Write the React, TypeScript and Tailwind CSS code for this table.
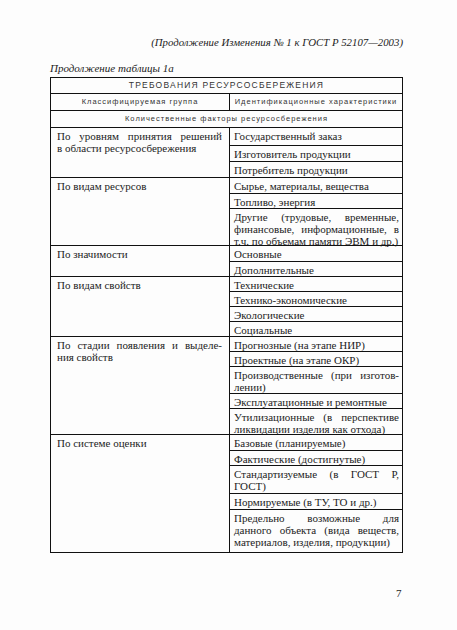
type Item = { lines: string[]; h: number };
type Group = { label: string[]; items: Item[] };

// heights include the row's own top border; the group border adds 1px on top of the first item
const GROUPS: Group[] = [
  {
    label: ["По уровням принятия решений", "в области ресурсосбережения"],
    items: [
      { lines: ["Государственный заказ"], h: 17 },
      { lines: ["Изготовитель продукции"], h: 16 },
      { lines: ["Потребитель продукции"], h: 16 },
    ],
  },
  {
    label: ["По видам ресурсов"],
    items: [
      { lines: ["Сырье, материалы, вещества"], h: 15 },
      { lines: ["Топливо, энергия"], h: 15 },
      {
        lines: [
          "Другие (трудовые, временные,",
          "финансовые, информационные, в",
          "т.ч. по объемам памяти ЭВМ и др.)",
        ],
        h: 37,
      },
    ],
  },
  {
    label: ["По значимости"],
    items: [
      { lines: ["Основные"], h: 15 },
      { lines: ["Дополнительные"], h: 15 },
    ],
  },
  {
    label: ["По видам свойств"],
    items: [
      { lines: ["Технические"], h: 14 },
      { lines: ["Технико-экономические"], h: 15 },
      { lines: ["Экологические"], h: 15 },
      { lines: ["Социальные"], h: 15 },
    ],
  },
  {
    label: ["По стадии появления и выделе-", "ния свойств"],
    items: [
      { lines: ["Прогнозные (на этапе НИР)"], h: 14 },
      { lines: ["Проектные (на этапе ОКР)"], h: 15 },
      { lines: ["Производственные (при изготов-", "лении)"], h: 27 },
      { lines: ["Эксплуатационные и ремонтные"], h: 15 },
      { lines: ["Утилизационные (в перспективе", "ликвидации изделия как отхода)"], h: 26 },
    ],
  },
  {
    label: ["По системе оценки"],
    items: [
      { lines: ["Базовые (планируемые)"], h: 15 },
      { lines: ["Фактические (достигнутые)"], h: 15 },
      { lines: ["Стандартизуемые (в ГОСТ Р,", "ГОСТ)"], h: 28 },
      { lines: ["Нормируемые (в ТУ, ТО и др.)"], h: 16 },
      {
        lines: [
          "Предельно возможные для",
          "данного объекта (вида веществ,",
          "материалов, изделия, продукции)",
        ],
        h: 43,
      },
    ],
  },
];

function Lines({ lines }: { lines: string[] }) {
  return (
    <>
      {lines.map((l, i) => (
        <div
          key={i}
          className={
            i < lines.length - 1
              ? "whitespace-nowrap text-justify [text-align-last:justify]"
              : "whitespace-nowrap"
          }
        >
          {l}
        </div>
      ))}
    </>
  );
}

export default function App() {
  return (
    <div className="w-[457px] h-[630px] bg-[#fdfdfd] text-[#1c1c1c] font-['Liberation_Serif',serif] relative">
      <div className="pt-[34px] pr-[54px] text-right italic text-[10.8px] leading-[16px]">
        (Продолжение Изменения № 1 к ГОСТ Р 52107—2003)
      </div>

      <div className="pl-[50px] pt-[10px] italic text-[11px] leading-[16px]">
        Продолжение таблицы 1а
      </div>

      <div className="ml-[50px] mt-[1px] w-[353px] border border-[#111]">
        <div className="h-[15px] flex items-center justify-center font-['Liberation_Sans',sans-serif] text-[8.5px] tracking-[1.2px] text-[#333]">
          ТРЕБОВАНИЯ РЕСУРСОСБЕРЕЖЕНИЯ
        </div>
        <div className="flex h-[17px] border-t border-[#111] font-['Liberation_Sans',sans-serif] text-[7.5px] tracking-[1px] text-[#333]">
          <div className="w-[179px] border-r border-[#111] flex items-center justify-center">
            Классифицируемая группа
          </div>
          <div className="flex-1 flex items-center justify-center whitespace-nowrap">
            Идентификационные характеристики
          </div>
        </div>
        <div className="h-[17px] border-t border-[#111] flex items-center justify-center font-['Liberation_Sans',sans-serif] text-[7.5px] tracking-[1px] text-[#333]">
          Количественные факторы ресурсосбережения
        </div>

        {GROUPS.map((g) => (
          <div key={g.label[0]} className="flex border-t border-[#111] text-[11px] leading-[12px]">
            <div className="w-[179px] shrink-0 border-r border-[#111] pl-[6px] pr-[7px] pt-[2px]">
              <Lines lines={g.label} />
            </div>
            <div className="flex-1 flex flex-col">
              {g.items.map((it, i) => (
                <div
                  key={it.lines[0]}
                  style={{ height: it.h }}
                  className={`pl-[4px] pr-[3px] pt-[2px] ${i > 0 ? "border-t border-[#111]" : ""}`}
                >
                  <Lines lines={it.lines} />
                </div>
              ))}
            </div>
          </div>
        ))}
      </div>

      <div className="absolute left-[396px] top-[586px] text-[11px] leading-[14px]">7</div>
    </div>
  );
}
